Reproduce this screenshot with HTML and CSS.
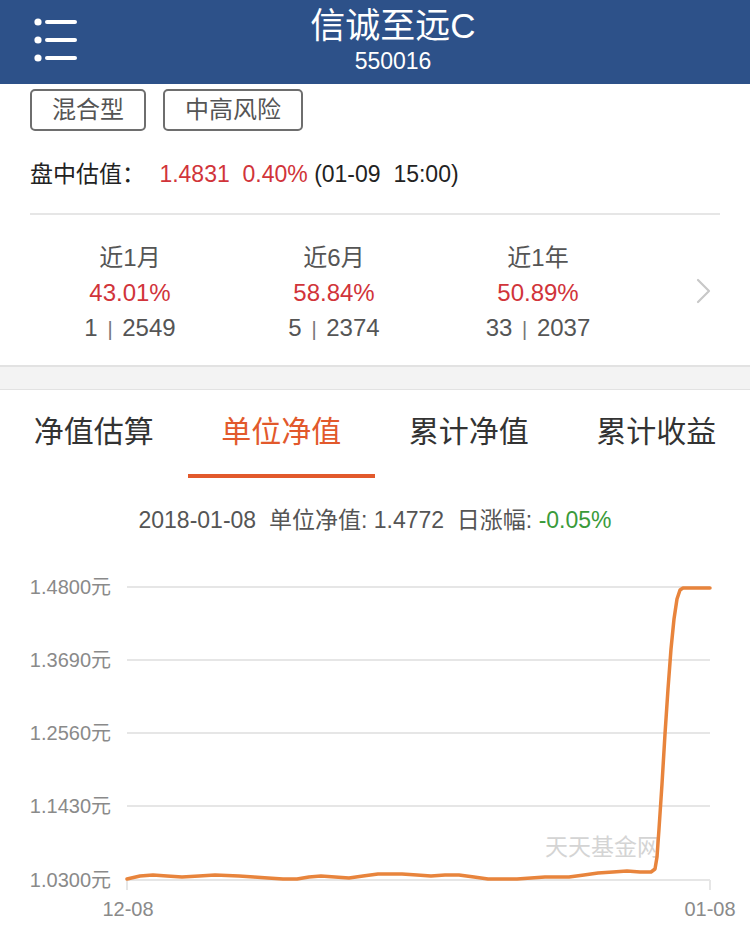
FILE: index.html
```html
<!DOCTYPE html>
<html lang="zh-CN">
<head>
    <meta charset="UTF-8">
    <meta name="viewport" content="width=device-width, initial-scale=1.0">
    <title>信诚至远C</title>
    <link rel="stylesheet" href="styles.css">
</head>
<body>
    <header class="topbar">
        <svg class="menu-icon" width="50" height="50" viewBox="0 0 50 50">
            <circle cx="7" cy="8" r="3.6" fill="#fff"/>
            <circle cx="7" cy="26" r="3.6" fill="#fff"/>
            <circle cx="7" cy="44" r="3.6" fill="#fff"/>
            <rect x="14" y="6" width="32" height="4" rx="2" fill="#fff"/>
            <rect x="14" y="24" width="32" height="4" rx="2" fill="#fff"/>
            <rect x="14" y="42" width="32" height="4" rx="2" fill="#fff"/>
        </svg>
        <div class="title">
            <h1>信诚至远C</h1>
            <div class="code">550016</div>
        </div>
    </header>

    <section class="summary">
        <div class="tags">
            <span class="tag">混合型</span>
            <span class="tag">中高风险</span>
        </div>
        <div class="estimate">
            <span class="label">盘中估值：</span>
            <span class="up">1.4831&nbsp; 0.40%</span>
            <span class="time">(01-09&nbsp; 15:00)</span>
        </div>
    </section>

    <section class="stats">
        <div class="stat">
            <div class="stat-name">近1月</div>
            <div class="stat-pct up">43.01%</div>
            <div class="stat-rank">1 <span class="sep">|</span> 2549</div>
        </div>
        <div class="stat">
            <div class="stat-name">近6月</div>
            <div class="stat-pct up">58.84%</div>
            <div class="stat-rank">5 <span class="sep">|</span> 2374</div>
        </div>
        <div class="stat">
            <div class="stat-name">近1年</div>
            <div class="stat-pct up">50.89%</div>
            <div class="stat-rank">33 <span class="sep">|</span> 2037</div>
        </div>
        <svg class="chevron" width="18" height="28" viewBox="0 0 18 28">
            <polyline points="3,3 14,14 3,25" fill="none" stroke="#c8c8c8" stroke-width="2.2" stroke-linecap="round" stroke-linejoin="round"/>
        </svg>
    </section>

    <div class="band"></div>

    <nav class="tabs">
        <div class="tab">净值估算</div>
        <div class="tab active">单位净值</div>
        <div class="tab">累计净值</div>
        <div class="tab">累计收益</div>
    </nav>

    <div class="info">2018-01-08&nbsp; 单位净值: 1.4772&nbsp; 日涨幅: <span class="down">-0.05%</span></div>

    <svg class="chart" width="750" height="375" viewBox="0 555 750 375">
        <g stroke="#e6e6e6" stroke-width="2">
            <line x1="127" y1="588" x2="710" y2="588"/>
            <line x1="127" y1="661" x2="710" y2="661"/>
            <line x1="127" y1="734" x2="710" y2="734"/>
            <line x1="127" y1="807" x2="710" y2="807"/>
            <line x1="127" y1="881" x2="710" y2="881"/>
            <line x1="127" y1="881" x2="127" y2="891"/>
            <line x1="710" y1="881" x2="710" y2="891"/>
        </g>
        <g class="axis-y" text-anchor="end">
            <text x="111" y="595">1.4800元</text>
            <text x="111" y="668">1.3690元</text>
            <text x="111" y="741">1.2560元</text>
            <text x="111" y="814">1.1430元</text>
            <text x="111" y="888">1.0300元</text>
        </g>
        <text class="watermark" x="545" y="856">天天基金网</text>
        <polyline fill="none" stroke="#e8843c" stroke-width="3.5" stroke-linejoin="round" stroke-linecap="round"
            points="127,880 140,877 153,876 167,877 182,878 199,877 215,876 239,877 254,878 268,879 283,880 297,880 309,878 321,877 335,878 349,879 363,877 378,875 402,875 417,876 431,877 445,876 459,876 474,878 488,880 503,880 517,880 531,879 545,878 569,878 584,876 598,874 613,873 627,872 640,873 651,873 655,870 657,858 659,830 662,785 665,735 668,690 671,650 674,620 677,600 680,591 683,589 710,589"/>
        <g class="axis-x" text-anchor="middle">
            <text x="128" y="917">12-08</text>
            <text x="710" y="917">01-08</text>
        </g>
    </svg>
</body>
</html>
```

FILE: styles.css
```css
body {
    margin: 0;
    width: 750px;
    background: #fff;
    font-family: "Liberation Sans", "Noto Sans CJK SC", sans-serif;
    color: #222;
}

.topbar {
    position: relative;
    height: 84px;
    background: #2d5189;
    color: #fff;
}
.menu-icon {
    position: absolute;
    left: 31px;
    top: 14px;
}
.title {
    text-align: center;
    padding-top: 5px;
    padding-left: 36px;
}
.title h1 {
    margin: 0;
    font-size: 35px;
    font-weight: normal;
    line-height: 42px;
}
.title .code {
    font-size: 23px;
    line-height: 28px;
}

.summary {
    padding: 5px 30px 0 30px;
}
.tags {
    display: flex;
    gap: 17px;
}
.tag {
    height: 38px;
    line-height: 38px;
    padding: 0 20px;
    border: 2px solid #6e6e6e;
    border-radius: 5px;
    font-size: 24px;
    color: #555;
}
.estimate {
    margin-top: 28px;
    font-size: 23px;
    line-height: 30px;
    padding-bottom: 24px;
    border-bottom: 2px solid #e6e6e6;
}
.estimate .label {
    margin-right: 8px;
}
.up {
    color: #d1343a;
}
.down {
    color: #3a9b3a;
}

.stats {
    display: flex;
    align-items: center;
    padding: 26px 0 0 28px;
    height: 124px;
}
.stat {
    width: 204px;
    text-align: center;
    font-size: 24px;
    line-height: 35px;
    color: #555;
    margin-top: -20px;
}
.stat-pct {
    color: #d1343a;
}
.sep {
    font-size: 20px;
    margin: 0 3px;
    color: #777;
}
.chevron {
    margin-left: 55px;
    margin-top: -25px;
}

.band {
    height: 22px;
    background: #f3f3f3;
    border-top: 2px solid #e2e2e2;
    border-bottom: 1px solid #e2e2e2;
}

.tabs {
    display: flex;
}
.tab {
    flex: 1;
    height: 84px;
    line-height: 84px;
    text-align: center;
    font-size: 30px;
    color: #333;
    border-bottom: 4px solid transparent;
}
.tab.active {
    color: #e2592c;
    border-bottom-color: #e2592c;
}

.info {
    text-align: center;
    font-size: 23px;
    line-height: 30px;
    margin-top: 27px;
    color: #555;
}

.chart {
    display: block;
    margin-top: 19px;
}
.axis-y text,
.axis-x text {
    font-size: 20px;
    fill: #8a8a8a;
}
.watermark {
    font-size: 23px;
    fill: #d4d4d4;
}
```
